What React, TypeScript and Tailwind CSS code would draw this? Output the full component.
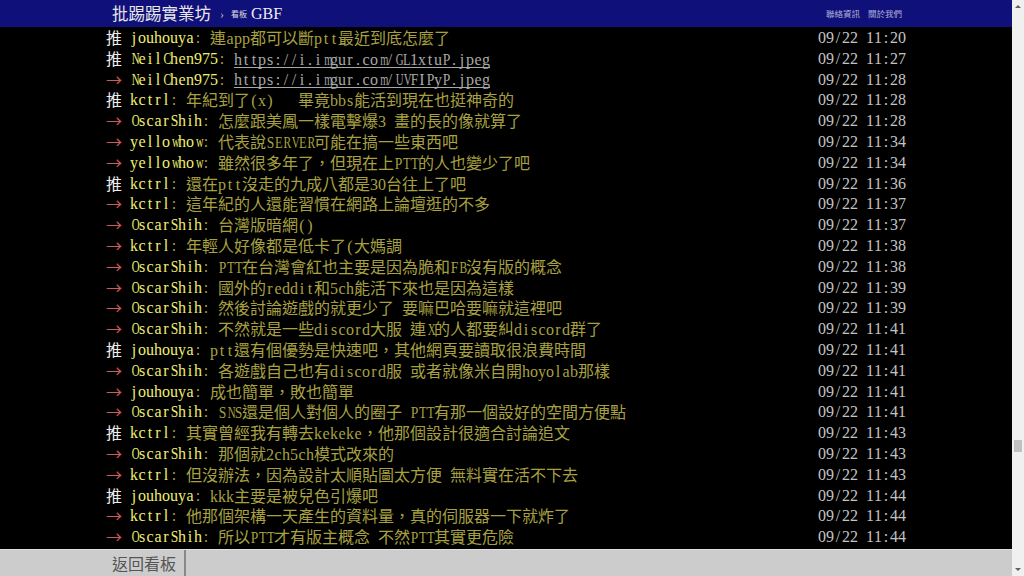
import React from 'react'

type Push = {
  tag: '推' | '→'
  user: string
  text: string
  time: string
  link?: boolean
}

const pushes: Push[] = [
  { tag: '推', user: 'jouhouya', text: '連app都可以斷ptt最近到底怎麼了', time: '09/22 11:20' },
  { tag: '推', user: 'NeilChen975', text: 'https://i.imgur.com/GL1xtuP.jpeg', time: '09/22 11:27', link: true },
  { tag: '→', user: 'NeilChen975', text: 'https://i.imgur.com/UVFIPyP.jpeg', time: '09/22 11:28', link: true },
  { tag: '推', user: 'kctrl', text: '年紀到了(x)   畢竟bbs能活到現在也挺神奇的', time: '09/22 11:28' },
  { tag: '→', user: 'OscarShih', text: '怎麼跟美鳳一樣電擊爆3 畫的長的像就算了', time: '09/22 11:28' },
  { tag: '→', user: 'yellowhow', text: '代表說SERVER可能在搞一些東西吧', time: '09/22 11:34' },
  { tag: '→', user: 'yellowhow', text: '雖然很多年了，但現在上PTT的人也變少了吧', time: '09/22 11:34' },
  { tag: '推', user: 'kctrl', text: '還在ptt沒走的九成八都是30台往上了吧', time: '09/22 11:36' },
  { tag: '→', user: 'kctrl', text: '這年紀的人還能習慣在網路上論壇逛的不多', time: '09/22 11:37' },
  { tag: '→', user: 'OscarShih', text: '台灣版暗網()', time: '09/22 11:37' },
  { tag: '→', user: 'kctrl', text: '年輕人好像都是低卡了(大媽調', time: '09/22 11:38' },
  { tag: '→', user: 'OscarShih', text: 'PTT在台灣會紅也主要是因為脆和FB沒有版的概念', time: '09/22 11:38' },
  { tag: '→', user: 'OscarShih', text: '國外的reddit和5ch能活下來也是因為這樣', time: '09/22 11:39' },
  { tag: '→', user: 'OscarShih', text: '然後討論遊戲的就更少了 要嘛巴哈要嘛就這裡吧', time: '09/22 11:39' },
  { tag: '→', user: 'OscarShih', text: '不然就是一些discord大服 連X的人都要糾discord群了', time: '09/22 11:41' },
  { tag: '推', user: 'jouhouya', text: 'ptt還有個優勢是快速吧，其他網頁要讀取很浪費時間', time: '09/22 11:41' },
  { tag: '→', user: 'OscarShih', text: '各遊戲自己也有discord服 或者就像米自開hoyolab那樣', time: '09/22 11:41' },
  { tag: '→', user: 'jouhouya', text: '成也簡單，敗也簡單', time: '09/22 11:41' },
  { tag: '→', user: 'OscarShih', text: 'SNS還是個人對個人的圈子 PTT有那一個設好的空間方便點', time: '09/22 11:41' },
  { tag: '推', user: 'kctrl', text: '其實曾經我有轉去kekeke，他那個設計很適合討論追文', time: '09/22 11:43' },
  { tag: '→', user: 'OscarShih', text: '那個就2ch5ch模式改來的', time: '09/22 11:43' },
  { tag: '→', user: 'kctrl', text: '但沒辦法，因為設計太順貼圖太方便 無料實在活不下去', time: '09/22 11:43' },
  { tag: '推', user: 'jouhouya', text: 'kkk主要是被兒色引爆吧', time: '09/22 11:44' },
  { tag: '→', user: 'kctrl', text: '他那個架構一天產生的資料量，真的伺服器一下就炸了', time: '09/22 11:44' },
  { tag: '→', user: 'OscarShih', text: '所以PTT才有版主概念 不然PTT其實更危險', time: '09/22 11:44' },
]

const term = { fontFamily: '"Liberation Serif", "Noto Sans CJK TC", serif' }
const cjk = { fontFamily: '"Noto Sans CJK TC", sans-serif' }

// squeeze wide serif glyphs into an 8px half-width cell
function squeeze(c: string) {
  if (c === 'M' || c === 'W') return 'scale-x-[0.55]'
  if (c === 'm' || c === 'w') return 'scale-x-[0.65]'
  if ('SPF'.includes(c)) return 'scale-x-[0.85]'
  if ('TELZ'.includes(c)) return 'scale-x-[0.78]'
  if ('CRB'.includes(c)) return 'scale-x-[0.72]'
  if (c >= 'A' && c <= 'Z' && c !== 'I' && c !== 'J') return 'scale-x-[0.68]'
  return ''
}

// terminal text: half-width chars sit in 8px cells, full-width ones take 16px
function Mono({ s, underline = false }: { s: string; underline?: boolean }) {
  return (
    <>
      {Array.from(s).map((c, i) =>
        c.charCodeAt(0) < 128 ? (
          <span key={i} className={`relative inline-block w-[8px] text-center ${underline ? 'border-b border-[#a8a8a8] leading-[15px]' : ''}`}>
            <span className={`inline-block ${squeeze(c)}`}>{c === ' ' ? '\u00a0' : c}</span>
          </span>
        ) : (
          <span key={i} className="inline-block w-[16px] text-center" style={cjk}>
            {c}
          </span>
        )
      )}
    </>
  )
}

function PushRow({ p }: { p: Push }) {
  return (
    <div className="flex h-[20.8px] items-center justify-between whitespace-pre text-[16px] leading-[20.8px]" style={term}>
      <div className="flex items-center">
        <span className={p.tag === '推' ? 'text-[#eeeeee]' : 'text-[#d05a5a]'}>
          <Mono s={p.tag + ' '} />
        </span>
        <span className="text-[#eeee70]">
          <Mono s={p.user} />
        </span>
        <span className="text-[#a8a040]">
          <Mono s=": " />
        </span>
        {p.link ? (
          <span className="flex pt-[1px] text-[#a8a8a8]">
            <Mono s={p.text} underline />
          </span>
        ) : (
          <span className="text-[#a8a040]">
            <Mono s={p.text} />
          </span>
        )}
      </div>
      <span className="w-[88px] text-[#c4c4c4]">
        <Mono s={p.time} />
      </span>
    </div>
  )
}

export default function App() {
  return (
    <div className="flex h-[576px] w-[1024px] overflow-hidden bg-black">
      <div className="flex w-[1012px] flex-col">
        <header className="flex h-[27px] shrink-0 justify-center bg-[#10107a]">
          <div className="flex w-[800px] items-center justify-between pl-[6px] pr-[4px]">
            <div className="flex items-center" style={term}>
              <span className="text-[16.5px] text-[#e8e8e8]" style={cjk}>批踢踢實業坊</span>
              <span className="ml-[9px] text-[12px] text-[#bbbbbb]">›</span>
              <span className="ml-[7px] text-[8px] text-[#dddddd]" style={cjk}>看板</span>
              <span className="ml-[4px] text-[16px] text-[#eeeeee]">GBF</span>
            </div>
            <div className="flex gap-[8px] pl-[3px] text-[8.5px] text-[#b0b0d8]" style={cjk}>
              <span>聯絡資訊</span>
              <span>關於我們</span>
            </div>
          </div>
        </header>

        <main className="flex flex-1 justify-center pt-[1px]">
          <div className="w-[800px]">
            {pushes.map((p, i) => (
              <PushRow key={i} p={p} />
            ))}
          </div>
        </main>

        <footer className="flex h-[27px] shrink-0 justify-center border-t border-[#e0e0e0] bg-[#cccccc]">
          <div className="flex w-[800px]">
            <div className="flex items-center border-r-2 border-[#888888] pl-[6px] pr-[8px] text-[16px] text-[#555555]" style={cjk}>
              返回看板
            </div>
          </div>
        </footer>
      </div>

      <div className="flex w-[12px] flex-col items-center bg-[#f0f0f0]">
        <div className="mt-[5px] h-0 w-0 border-x-[3px] border-b-[3px] border-x-transparent border-b-[#606060]" />
        <div className="mt-[432px] h-[12px] w-[8px] bg-[#c1c1c1]" />
        <div className="mt-auto mb-[5px] h-0 w-0 border-x-[3px] border-t-[3px] border-x-transparent border-t-[#606060]" />
      </div>
    </div>
  )
}
